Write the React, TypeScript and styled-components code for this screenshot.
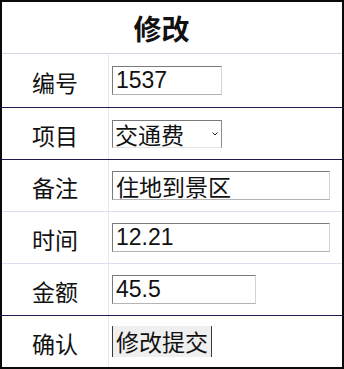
import styled, { createGlobalStyle } from 'styled-components';

const GlobalStyle = createGlobalStyle`
	html, body {
		margin: 0;
		padding: 0;
		background: #ffffff;
	}
	body {
		font-family: "Liberation Sans", "Noto Sans CJK SC", sans-serif;
		color: #111111;
	}
`;

const Sheet = styled.div`
	border: 2px solid #0a0a0a;
	box-sizing: border-box;
	display: flex;
	flex-direction: column;
	height: 369px;
	width: 344px;
	overflow: hidden;
	background: #ffffff;
`;

const TitleRow = styled.div`
	align-items: center;
	border-bottom: 1px solid #d6d6e6;
	box-sizing: border-box;
	display: flex;
	font-family: "Noto Sans CJK SC", sans-serif;
	font-size: 28px;
	font-weight: 700;
	height: 52px;
	justify-content: center;
	padding-right: 21px;
`;

const Row = styled.div<{ $height: number; $dark?: boolean; $last?: boolean }>`
	border-bottom: ${(p) =>
		p.$last ? 'none' : p.$dark ? '1px solid #1e1b52' : '1px solid #dedeee'};
	box-sizing: border-box;
	display: grid;
	grid-template-columns: 107px 1fr;
	height: ${(p) => p.$height}px;
`;

const Label = styled.div`
	align-items: center;
	border-right: 1px solid #e6e6f2;
	display: flex;
	font-family: "Noto Sans CJK SC", sans-serif;
	font-size: 23px;
	justify-content: center;
	padding-top: 2px;
`;

const Cell = styled.div`
	align-items: center;
	display: flex;
	min-width: 0;
	padding-left: 3px;
`;

const Field = styled.input<{ $width: number }>`
	border-top: 1px solid #7a7a7a;
	border-left: 1px solid #7a7a7a;
	border-right: 1px solid #d4d4d4;
	border-bottom: 1px solid #b4b4b4;
	box-sizing: border-box;
	color: #111111;
	flex: none;
	font-family: "Liberation Sans", "Noto Sans CJK SC", sans-serif;
	font-size: 23px;
	height: 29px;
	margin: 0;
	outline: none;
	padding: 0 3px;
	width: ${(p) => p.$width}px;
`;

const SelectWrap = styled.div`
	flex: none;
	position: relative;
	width: 110px;
`;

const Picker = styled.select`
	appearance: none;
	background: #ffffff;
	border-top: 1px solid #7a7a7a;
	border-left: 1px solid #7a7a7a;
	border-right: 1px solid #8a8a8a;
	border-bottom: 1px solid #e4e4e4;
	border-radius: 0;
	box-sizing: border-box;
	color: #111111;
	font-family: "Noto Sans CJK SC", sans-serif;
	font-size: 23px;
	height: 28px;
	line-height: 26px;
	margin: 0;
	outline: none;
	padding: 0 2px;
	width: 110px;
`;

const Chevron = styled.svg`
	pointer-events: none;
	position: absolute;
	right: 4px;
	top: 12px;
`;

const Submit = styled.button`
	background: #efefef;
	border: none;
	border-left: 1px solid #3a3a3a;
	border-right: 1px solid #3a3a3a;
	box-sizing: border-box;
	color: #111111;
	font-family: "Noto Sans CJK SC", sans-serif;
	font-size: 23px;
	height: 31px;
	line-height: 29px;
	margin: 0;
	padding: 0 3px;
`;

export default function App() {
	return (
		<>
			<GlobalStyle />
			<Sheet>
				<TitleRow>修改</TitleRow>
				<Row $height={54} $dark>
					<Label>编号</Label>
					<Cell>
						<Field $width={110} defaultValue="1537" />
					</Cell>
				</Row>
				<Row $height={52} $dark>
					<Label>项目</Label>
					<Cell>
						<SelectWrap>
							<Picker defaultValue="交通费">
								<option>交通费</option>
								<option>住宿费</option>
								<option>餐饮费</option>
							</Picker>
							<Chevron width="6" height="4" viewBox="0 0 6 4">
								<path d="M0.5 0.5 L3 3 L5.5 0.5" fill="none" stroke="#222" strokeWidth="1" />
							</Chevron>
						</SelectWrap>
					</Cell>
				</Row>
				<Row $height={52}>
					<Label>备注</Label>
					<Cell>
						<Field $width={218} defaultValue="住地到景区" />
					</Cell>
				</Row>
				<Row $height={52}>
					<Label>时间</Label>
					<Cell>
						<Field $width={218} defaultValue="12.21" />
					</Cell>
				</Row>
				<Row $height={52} $dark>
					<Label>金额</Label>
					<Cell>
						<Field $width={144} defaultValue="45.5" />
					</Cell>
				</Row>
				<Row $height={51} $last>
					<Label>确认</Label>
					<Cell>
						<Submit>修改提交</Submit>
					</Cell>
				</Row>
			</Sheet>
		</>
	);
}
